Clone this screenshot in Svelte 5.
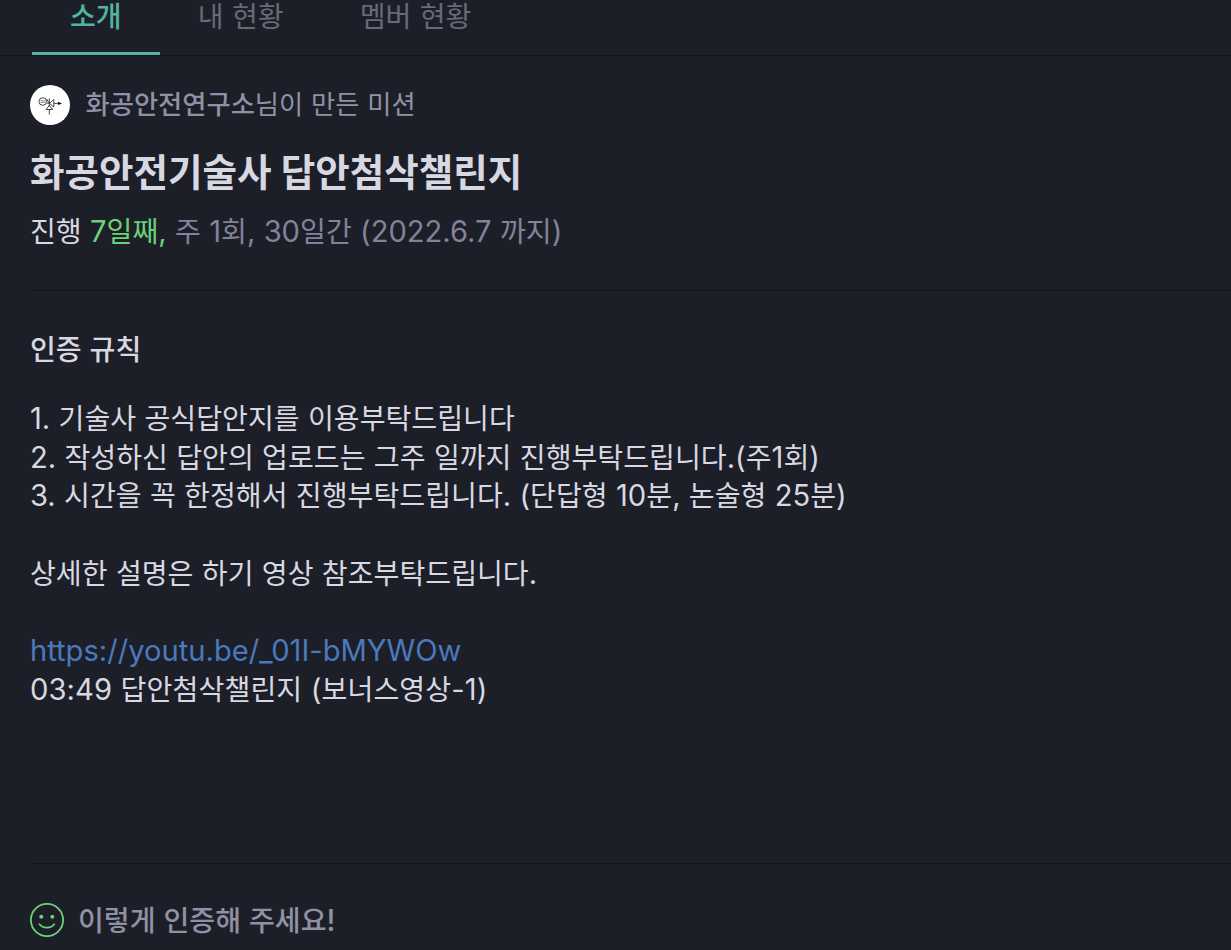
<script lang="ts">
    const tabs = ["소개", "내 현황", "멤버 현황"];
    let active = $state(0);

    const rules = [
        "1. 기술사 공식답안지를 이용부탁드립니다",
        "2. 작성하신 답안의 업로드는 그주 일까지 진행부탁드립니다.(주1회)",
        "3. 시간을 꼭 한정해서 진행부탁드립니다. (단답형 10분, 논술형 25분)",
    ];

    // latin runs are set a bit larger than the hangul around them
    const split = (text: string) => text.split(/([!-~]+)/).filter(Boolean);
</script>

{#snippet mixed(text: string)}{#each split(text) as run}{#if /[!-~]/.test(run)}<span class="latin">{run}</span>{:else}{run}{/if}{/each}{/snippet}

<main class="page" lang="ko">
    <nav class="tabs">
        {#each tabs as tab, i}
            <button
                class="tab"
                class:active={active === i}
                onclick={() => (active = i)}>{tab}</button
            >
        {/each}
    </nav>

    <header class="mission">
        <div class="author">
            <svg class="avatar" viewBox="0 0 40 40" aria-hidden="true">
                <circle cx="20" cy="20" r="20" fill="#fff" />
                <g fill="none" stroke="#333" stroke-width="0.9">
                    <circle cx="12.8" cy="16.5" r="3.8" />
                    <path d="M10.5 15.8h5M10.5 17.3h5" stroke="#888" />
                    <path d="M17 18.2h3M19.3 13.5v8M23.8 14.5v7.5l-4.3-3.7zM19.3 20.5l-3.3 4h6.6zM19.3 24.5v5M24 18.4h5" />
                    <path d="M16.5 14l3 4.5" />
                </g>
                <path d="M28 16.8l4 1.6-4 1.6z" fill="#111" />
            </svg>
            <p><strong>화공안전연구소</strong>님이 만든 미션</p>
        </div>
        <h1>화공안전기술사 답안첨삭챌린지</h1>
        <p class="period">
            <span class="state">진행</span>
            <span class="day">{@render mixed("7일째,")}</span>
            {@render mixed("주 1회, 30일간 (2022.6.7 까지)")}
        </p>
    </header>

    <section class="rules">
        <h2>인증 규칙</h2>
        <ol>
            {#each rules as rule}
                <li>{@render mixed(rule)}</li>
            {/each}
        </ol>
        <p>{@render mixed("상세한 설명은 하기 영상 참조부탁드립니다.")}</p>
        <div class="video">
            <a href="https://youtu.be/_01I-bMYWOw">{@render mixed("https://youtu.be/_01I-bMYWOw")}</a>
            <span>{@render mixed("03:49 답안첨삭챌린지 (보너스영상-1)")}</span>
        </div>
    </section>

    <footer>
        <div class="guide">
            <svg class="smile" viewBox="0 0 34 34" aria-hidden="true">
                <circle cx="17" cy="17" r="16.1" />
                <path d="M9.5 21.3c3.2 4.4 11.6 4.4 14.8 0" />
                <circle class="eye" cx="11.3" cy="13.7" r="2" />
                <circle class="eye" cx="22.3" cy="13.7" r="2" />
            </svg>
            <span>{@render mixed("이렇게 인증해 주세요!")}</span>
        </div>
    </footer>
</main>

<style>
    :global(body) {
        background: #1d1f28;
    }

    .page {
        height: 950px;
        overflow: hidden;
        background: #1d1f28;
        color: #d8d8e2;
        font-family: Inter, "Noto Sans CJK KR", sans-serif;
        font-size: 28.12px;
        line-height: 38.75px;
        word-spacing: 0.4px;
        white-space: nowrap;
    }

    p,
    h1,
    h2,
    ol {
        margin: 0;
        padding: 0;
    }

    .latin {
        font-size: 29.15px;
        line-height: 0;
    }

    .tabs {
        display: flex;
        height: 55px;
        padding-left: 32px;
        border-bottom: 1px solid #12131a;
    }

    .tab {
        box-sizing: border-box;
        height: 55px;
        padding: 0 38px 19px;
        border: none;
        border-bottom: 3px solid transparent;
        background: none;
        color: #686979;
        font: inherit;
        line-height: 30px;
        word-spacing: inherit;
        cursor: pointer;
    }

    .tab.active {
        border-color: #50b4a0;
        color: #50b4a0;
        font-weight: 500;
    }

    .mission {
        height: 234px;
        margin-left: 30px;
        border-bottom: 1px solid #12131a;
    }

    .author {
        display: flex;
        align-items: center;
        gap: 15.5px;
        padding-top: 29px;
        height: 40px;
        color: #9191a5;
        font-size: 26.3px;
    }

    .avatar {
        width: 40px;
        height: 40px;
    }

    .author strong {
        font-weight: 500;
    }

    h1 {
        margin-top: 20px;
        font-size: 37.5px;
        font-weight: 700;
        line-height: 56px;
    }

    .period {
        margin-top: 12px;
        color: #82839a;
    }

    .state {
        color: #d8d8e2;
    }

    .day {
        color: #6bd177;
    }

    .rules {
        box-sizing: border-box;
        height: 572px;
        margin-left: 30px;
        padding-top: 40px;
    }

    h2 {
        font-size: 28.1px;
        font-weight: 500;
    }

    ol {
        margin-top: 30px;
        list-style: none;
    }

    .rules p {
        margin-top: 38.75px;
    }

    .video {
        display: flex;
        flex-direction: column;
        align-items: flex-start;
        margin-top: 38.75px;
    }

    .video a {
        color: #4a79bd;
        text-decoration: none;
    }

    .video span {
        letter-spacing: 0.1px;
    }

    .video a span {
        letter-spacing: 0;
    }

    footer {
        margin-left: 32px;
        border-top: 1px solid #12131a;
    }

    .guide {
        display: flex;
        align-items: center;
        gap: 14px;
        margin-left: -2px;
        padding-top: 36px;
        color: #9191a5;
        font-weight: 500;
    }

    .guide > span {
        padding-top: 1.6px;
    }

    .smile {
        width: 34px;
        height: 34px;
        fill: none;
        stroke: #6bd177;
        stroke-width: 1.8;
        stroke-linecap: round;
    }

    .smile .eye {
        fill: #6bd177;
        stroke: none;
    }
</style>
